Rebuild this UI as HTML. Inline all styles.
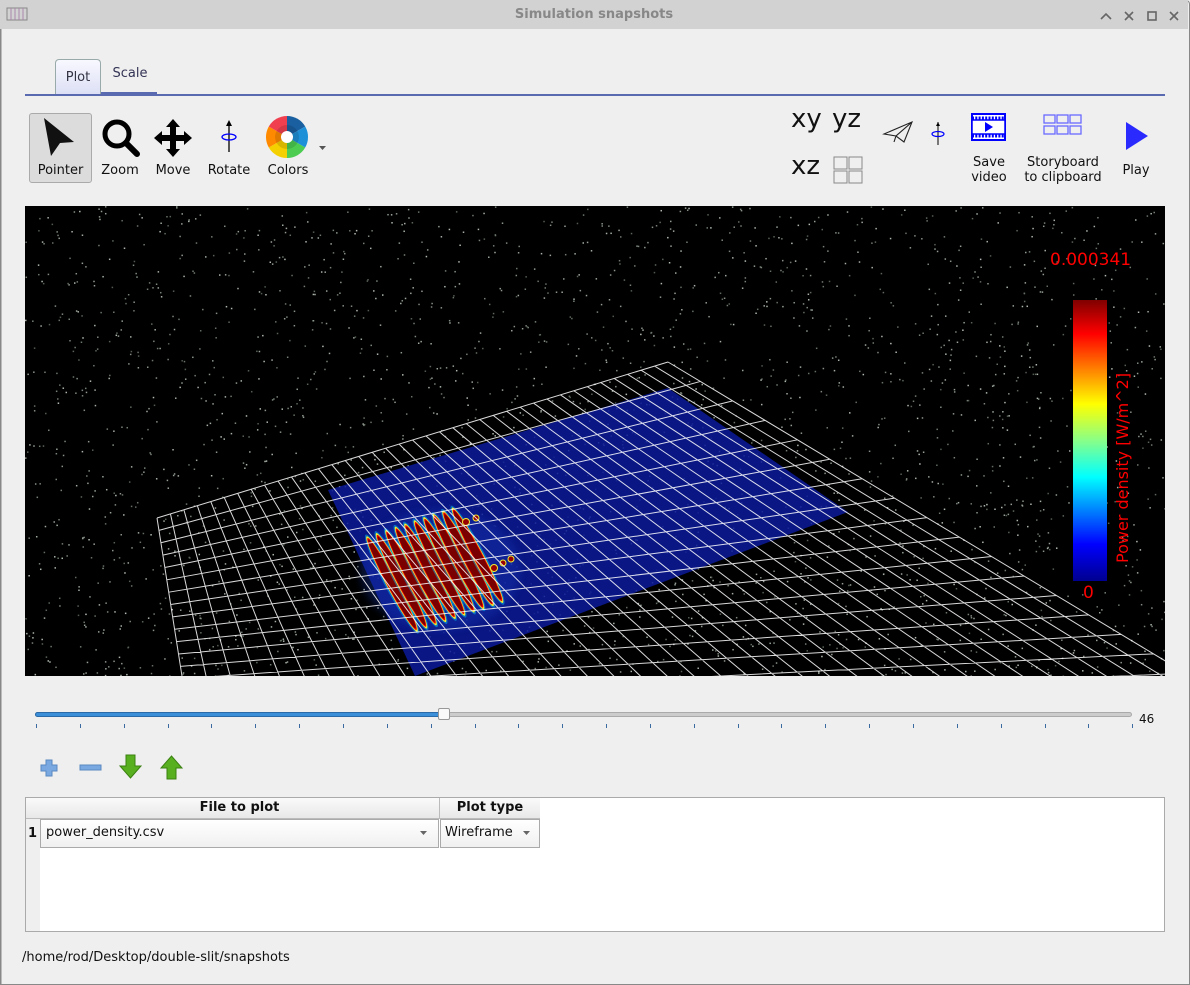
<!DOCTYPE html>
<html><head><meta charset="utf-8"><style>
*{margin:0;padding:0;box-sizing:border-box}
body{width:1190px;height:985px;background:#efefef;font-family:"DejaVu Sans","Liberation Sans",sans-serif;font-size:13px;color:#111;position:relative;overflow:hidden}
.win{position:absolute;left:0;top:0;width:1190px;height:985px;border:1px solid #888;border-radius:4px 4px 0 0}
.title{position:absolute;left:0;top:0;width:1188px;height:29px;background:#d2d2d2;text-align:center;line-height:30px;color:#888;font-weight:bold;font-size:13px}
.abs{position:absolute}
.lbl{position:absolute;font-size:13px;text-align:center}
</style></head><body>
<div class="win"></div>
<div class="title">Simulation snapshots</div>
<svg class="abs" style="left:6px;top:7px" width="22" height="14"><rect x="1" y="1" width="20" height="12" fill="none" stroke="#888"/><path d="M5 1v12M9 1v12M13 1v12M17 1v12" stroke="#a8a"/></svg>
<svg class="abs" style="left:1098px;top:8px" width="85" height="16" stroke="#666" stroke-width="1.6" fill="none"><path d="M3 11l5-5 5 5"/><path d="M27 4l8 8M35 4l-8 8"/><rect x="50" y="4" width="8" height="8"/><path d="M72 4l8 8M80 4l-8 8"/></svg>
<div class="abs" style="left:1px;top:29px;width:1187px;height:955px;border-left:1px solid #bbb"></div>
<div class="abs" style="left:55px;top:59px;width:46px;height:35px;border:1px solid #9aa;border-bottom:none;border-radius:4px 4px 0 0;background:linear-gradient(#f8f8ff,#dde0f5)"></div>
<div class="lbl" style="left:55px;top:70px;width:46px;color:#334">Plot</div>
<div class="lbl" style="left:104px;top:66px;width:52px;color:#335">Scale</div>
<div class="abs" style="left:101px;top:92px;width:56px;height:2px;background:#5a6ab0"></div>
<div class="abs" style="left:25px;top:94px;width:1140px;height:2px;background:#5a6ab0"></div>
<div class="abs" style="left:29px;top:113px;width:63px;height:70px;background:#dcdcdc;border:1px solid #aaa;border-radius:3px"></div>
<svg class="abs" style="left:40px;top:116px" width="40" height="42"><path d="M4 2 L34 26 L20 27 L11 40 Z" fill="#111"/></svg>
<div class="lbl" style="left:29px;top:163px;width:63px">Pointer</div>
<svg class="abs" style="left:100px;top:116px" width="40" height="42"><circle cx="17" cy="18" r="12" fill="none" stroke="#000" stroke-width="5"/><path d="M26 27l11 11" stroke="#000" stroke-width="6" stroke-linecap="round"/></svg>
<div class="lbl" style="left:95px;top:163px;width:50px">Zoom</div>
<svg class="abs" style="left:152px;top:117px" width="42" height="42"><path d="M21 2l7 8h-4v8h8v-4l8 7-8 7v-4h-8v8h4l-7 8-7-8h4v-8h-8v4l-8-7 8-7v4h8v-8h-4z" fill="#000"/></svg>
<div class="lbl" style="left:148px;top:163px;width:50px">Move</div>
<svg class="abs" style="left:214px;top:118px" width="30" height="36"><path d="M15 34V4" stroke="#000" stroke-width="1.3"/><path d="M12 8l3-6 3 6z" fill="#000"/><ellipse cx="15" cy="19" rx="7" ry="3" fill="none" stroke="#00f" stroke-width="1.3"/></svg>
<div class="lbl" style="left:203px;top:163px;width:52px">Rotate</div>
<svg class="abs" style="left:266px;top:116px" width="44" height="44"><g transform="translate(21,21)">
<path d="M0 0L0-21A21 21 0 0 1 18.2-10.5Z" fill="#1a5fa0"/><path d="M0 0L18.2-10.5A21 21 0 0 1 18.2 10.5Z" fill="#1e90d8"/><path d="M0 0L18.2 10.5A21 21 0 0 1 0 21Z" fill="#4ccc50"/><path d="M0 0L0 21A21 21 0 0 1-18.2 10.5Z" fill="#f5d000"/><path d="M0 0L-18.2 10.5A21 21 0 0 1-18.2-10.5Z" fill="#ff8a00"/><path d="M0 0L-18.2-10.5A21 21 0 0 1 0-21Z" fill="#f04050"/>
<circle r="12" fill="rgba(0,0,0,0.12)"/><circle r="6" fill="#fff"/></g></svg>
<svg class="abs" style="left:318px;top:145px" width="10" height="6"><path d="M1 1h7l-3.5 4z" fill="#555"/></svg>
<div class="lbl" style="left:263px;top:163px;width:50px">Colors</div>
<div class="abs" style="left:791px;top:104px;font-size:26px">xy</div>
<div class="abs" style="left:832px;top:104px;font-size:26px">yz</div>
<div class="abs" style="left:791px;top:151px;font-size:26px">xz</div>
<svg class="abs" style="left:833px;top:156px" width="31" height="29" fill="none" stroke="#888"><rect x="1" y="1" width="13" height="12"/><rect x="16" y="1" width="13" height="12"/><rect x="1" y="15" width="13" height="12"/><rect x="16" y="15" width="13" height="12"/></svg>
<svg class="abs" style="left:882px;top:120px" width="32" height="24" fill="none" stroke="#222" stroke-width="1.1"><path d="M2 14L30 2L22 22L14 16Z M30 2L14 16L12 22L14 16 M2 14L14 16"/></svg>
<svg class="abs" style="left:928px;top:120px" width="20" height="26"><path d="M10 25V2" stroke="#000"/><path d="M8 6l2-4 2 4z" fill="#000"/><ellipse cx="10" cy="14" rx="6" ry="2.5" fill="none" stroke="#00f" stroke-width="1.2"/></svg>
<svg class="abs" style="left:971px;top:113px" width="36" height="28"><rect x="1" y="1" width="33" height="26" fill="#fff" stroke="#00f" stroke-width="2"/><path d="M1 5h33M1 23h33" stroke="#00f" stroke-width="3" stroke-dasharray="2 1.3"/><rect x="1" y="7" width="33" height="14" fill="#fff" stroke="#00f" stroke-width="1.5"/><path d="M14 9l8 5-8 5z" fill="#00f"/></svg>
<div class="lbl" style="left:960px;top:155px;width:58px;line-height:15px">Save<br>video</div>
<svg class="abs" style="left:1043px;top:114px" width="40" height="22" fill="none" stroke="#6a6aff" stroke-width="1.3"><rect x="1" y="1" width="11" height="8"/><rect x="14" y="1" width="11" height="8"/><rect x="27" y="1" width="11" height="8"/><rect x="1" y="12" width="11" height="8"/><rect x="14" y="12" width="11" height="8"/><rect x="27" y="12" width="11" height="8"/></svg>
<div class="lbl" style="left:1018px;top:155px;width:90px;line-height:15px">Storyboard<br>to clipboard</div>
<svg class="abs" style="left:1124px;top:120px" width="26" height="32"><path d="M2 2L24 16L2 30Z" fill="#2a2aff"/></svg>
<div class="lbl" style="left:1115px;top:163px;width:42px">Play</div>
<svg id="plot" class="abs" style="left:25px;top:206px" width="1140" height="470" viewBox="25 206 1140 470">
<defs><clipPath id="cp"><rect x="25" y="206" width="1140" height="470"/></clipPath>
<linearGradient id="jet" x1="0" y1="0" x2="0" y2="1"><stop offset="0" stop-color="#800000"/><stop offset=".12" stop-color="#f00"/><stop offset=".37" stop-color="#ff0"/><stop offset=".5" stop-color="#8f8"/><stop offset=".63" stop-color="#0ff"/><stop offset=".87" stop-color="#00f"/><stop offset="1" stop-color="#00008f"/></linearGradient>
<filter id="bl"><feGaussianBlur stdDeviation="4"/></filter></defs>
<rect x="25" y="206" width="1140" height="470" fill="#000"/>
<g id="stars"></g>
<g clip-path="url(#cp)">
<path id="bp" d="M328 490L668 388L848 512L415 676Z" fill="#0a1a9a" fill-opacity=".85"/>
<ellipse cx="440" cy="570" rx="80" ry="60" fill="#1a40c0" opacity=".3" filter="url(#bl)"/>
<g id="stripes"></g>
<g id="grid" stroke="#fff" stroke-width="1" fill="none" opacity=".85"></g>
</g>
<text x="1050" y="265" fill="#f00" font-family="DejaVu Sans" font-size="17">0.000341</text>
<rect x="1073" y="300" width="34" height="281" fill="url(#jet)"/>
<text x="1083" y="598" fill="#f00" font-family="DejaVu Sans" font-size="17">0</text>
<text transform="translate(1128,563) rotate(-90)" fill="#f00" font-family="DejaVu Sans" font-size="16">Power density [W/m^2]</text>
</svg>
<div class="abs" style="left:35px;top:712px;width:1097px;height:5px;background:#ccc;border:1px solid #aaa;border-radius:3px"></div>
<div class="abs" style="left:35px;top:712px;width:410px;height:5px;background:#3a8fd8;border:1px solid #2a6aa8;border-radius:3px"></div>
<div class="abs" style="left:438px;top:708px;width:12px;height:12px;background:#fafafa;border:1px solid #999;border-radius:2px"></div>
<div id="ticks"></div>
<div class="abs" style="left:1139px;top:712px;font-size:12px">46</div>
<svg class="abs" style="left:38px;top:757px" width="22" height="22"><path d="M8 3h6v5h5v6h-5v5h-6v-5h-5v-6h5z" fill="#7aa8e0" stroke="#5a88c0"/></svg>
<svg class="abs" style="left:79px;top:763px" width="24" height="10"><rect x="1" y="2" width="21" height="5" fill="#7aa8e0" stroke="#5a88c0"/></svg>
<svg class="abs" style="left:118px;top:753px" width="26" height="28"><path d="M8 2h9v11h6l-10.5 12L2 13h6z" fill="#58b020" stroke="#3a8010"/></svg>
<svg class="abs" style="left:159px;top:753px" width="26" height="28"><path d="M8 26h9V15h6L12.5 3 2 15h6z" fill="#58b020" stroke="#3a8010"/></svg>
<div class="abs" style="left:25px;top:797px;width:1140px;height:135px;background:#fff;border:1px solid #aaa"></div>
<div class="abs" style="left:26px;top:798px;width:14px;height:133px;background:#efefef"></div>
<div class="abs" style="left:26px;top:798px;width:514px;height:21px;background:linear-gradient(#fafafa,#e8e8e8);border-bottom:1px solid #bbb"></div>
<div class="abs" style="left:439px;top:798px;width:1px;height:21px;background:#bbb"></div>
<div class="abs" style="left:40px;top:800px;width:399px;text-align:center;font-weight:bold">File to plot</div>
<div class="abs" style="left:440px;top:800px;width:100px;text-align:center;font-weight:bold">Plot type</div>
<div class="abs" style="left:28px;top:826px;font-weight:bold">1</div>
<div class="abs" style="left:40px;top:819px;width:399px;height:29px;border:1px solid #aaa;background:linear-gradient(#fff,#f0f0f0)"></div>
<div class="abs" style="left:46px;top:825px">power_density.csv</div>
<svg class="abs" style="left:419px;top:830px" width="10" height="6"><path d="M1 1h7l-3.5 4z" fill="#666"/></svg>
<div class="abs" style="left:440px;top:819px;width:100px;height:29px;border:1px solid #aaa;background:linear-gradient(#fff,#f0f0f0)"></div>
<div class="abs" style="left:445px;top:825px">Wireframe</div>
<svg class="abs" style="left:522px;top:830px" width="10" height="6"><path d="M1 1h7l-3.5 4z" fill="#666"/></svg>
<div class="abs" style="left:22px;top:950px">/home/rod/Desktop/double-slit/snapshots</div>
<script>
(function(){
var ns="http://www.w3.org/2000/svg";
function el(t,a,p){var e=document.createElementNS(ns,t);for(var k in a)e.setAttribute(k,a[k]);p.appendChild(e);return e;}
var s=12345;function r(){s=(s*16807)%2147483647;return s/2147483647;}
var st=document.getElementById('stars');
for(var i=0;i<2600;i++){var g=Math.floor(80+r()*100);el('rect',{x:25+r()*1140,y:206+r()*470,width:1.5,height:1.5,fill:'rgb('+g+','+(g+10)+','+g+')'},st);}
var A=[157,518],B=[668,362],C=[1380,790],D=[200,790];
function L(a,b,t){return [a[0]+(b[0]-a[0])*t,a[1]+(b[1]-a[1])*t];}
var gr=document.getElementById('grid'),d='';
var N=38,M=22;
for(var i=0;i<=N;i++){var t=i/N,p=L(A,B,t),q=L(D,C,t);d+='M'+p[0]+' '+p[1]+'L'+q[0]+' '+q[1];}
for(var j=0;j<=M;j++){var t=j/M,p=L(A,D,t),q=L(B,C,t);d+='M'+p[0]+' '+p[1]+'L'+q[0]+' '+q[1];}
el('path',{d:d},gr);
var sp=document.getElementById('stripes');
for(var k=0;k<10;k++){var cx=392+k*9.5,cy=584-k*3.2,tr='rotate(-28 '+cx+' '+cy+')';
el('ellipse',{cx:cx,cy:cy,rx:7,ry:56,fill:'#0cf',opacity:.45,transform:tr},sp);
el('ellipse',{cx:cx,cy:cy,rx:5.5,ry:54,fill:'#ee3',transform:tr},sp);
el('ellipse',{cx:cx,cy:cy,rx:4.8,ry:52,fill:'#e00',transform:tr},sp);
el('ellipse',{cx:cx,cy:cy,rx:4,ry:50,fill:'#7a0000',transform:tr},sp);}
[[466,522,3.5],[476,518,3],[494,568,3.5],[503,563,3],[511,559,3]].forEach(function(c){el('circle',{cx:c[0],cy:c[1],r:c[2],fill:'#900',stroke:'#ee3',"stroke-width":1},sp);});
var tk=document.getElementById('ticks');
for(var i=0;i<26;i++){var x=36+i*43.85;var e=document.createElement('div');e.className='abs';e.style.cssText='left:'+x+'px;top:724px;width:1px;height:4px;background:#3a6aa0';tk.appendChild(e);}
})();
</script>
</body></html>
